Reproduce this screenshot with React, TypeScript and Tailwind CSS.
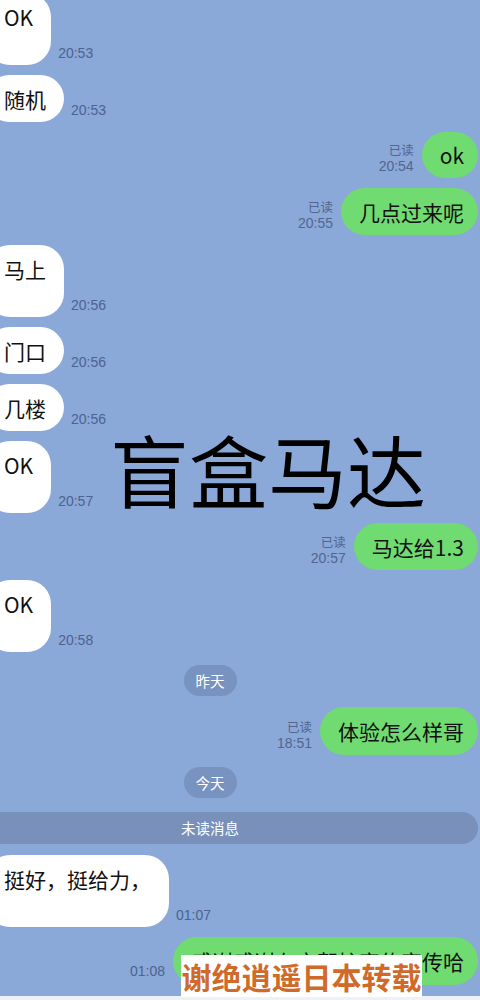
import React from "react";

const FONT = { fontFamily: '"Noto Sans CJK SC", "Noto Sans", sans-serif' };
const TS = { fontFamily: '"Liberation Sans", "Noto Sans CJK SC", sans-serif' };

function Left({ text, h, time }: { text: string; h: "s" | "t"; time: string }) {
  return (
    <div className="flex items-end gap-[7px]">
      <div
        className={
          "-ml-[14px] pl-[18px] pr-[18px] bg-white text-[#111] text-[21px] leading-[28px] rounded-[24px] " +
          (h === "t" ? "h-[72px] pt-[10px]" : "h-[47px] pt-[10px]")
        }
      >
        {text}
      </div>
      <div className="mb-[4px] text-[14px] leading-[16px] text-[#4d6390]" style={TS}>
        {time}
      </div>
    </div>
  );
}

function Right({ text, time, h = 47 }: { text: string; time: string; h?: number }) {
  return (
    <div className="flex items-end justify-end gap-[8px]">
      <div className="mb-[4px] flex flex-col items-end text-[#52668f]">
        <span className="text-[12.5px] leading-[16px]">已读</span>
        <span className="text-[14px] leading-[16px]" style={TS}>
          {time}
        </span>
      </div>
      <div
        className="mr-[2px] pl-[18px] pr-[14px] bg-[#70db70] text-[#111] text-[21px] leading-[28px] rounded-[24px] flex items-center"
        style={{ height: h }}
      >
        {text}
      </div>
    </div>
  );
}

function Pill({ text }: { text: string }) {
  return (
    <div className="flex justify-center pr-[60px]">
      <div className="h-[31px] px-[12px] rounded-full bg-[#7893bf] text-white text-[14.5px] leading-[31px]">{text}</div>
    </div>
  );
}

export default function App() {
  return (
    <div className="relative w-[480px] h-[1000px] overflow-hidden bg-[#8aa8d8]" style={FONT}>
      <div className="flex flex-col gap-[10px] -mt-[7px]">
        <Left text="OK" h="t" time="20:53" />
        <Left text="随机" h="s" time="20:53" />
        <Right text="ok" time="20:54" h={46} />
        <Right text="几点过来呢" time="20:55" />
        <Left text="马上" h="t" time="20:56" />
        <Left text="门口" h="s" time="20:56" />
        <Left text="几楼" h="s" time="20:56" />
        <Left text="OK" h="t" time="20:57" />
        <Right text="马达给1.3" time="20:57" />
        <Left text="OK" h="t" time="20:58" />
        <div className="mt-[3px]">
          <Pill text="昨天" />
        </div>
        <div className="mt-[1px]">
          <Right text="体验怎么样哥" time="18:51" h={48} />
        </div>
        <div className="mt-[2px]">
          <Pill text="今天" />
        </div>
        <div className="mt-[4px] -ml-[16px] mr-[2px] h-[32px] rounded-full bg-[#7890ba] flex items-center justify-center pr-[42px] text-white text-[14.5px]">
          未读消息
        </div>
        <div className="mt-[1px]">
          <Left text="挺好，挺给力，" h="t" time="01:07" />
        </div>
        <div className="flex items-end justify-end gap-[8px]">
          <div className="mb-[6px] text-[14px] leading-[16px] text-[#4d6390]" style={TS}>
            01:08
          </div>
          <div className="mr-[2px] h-[48px] pl-[18px] pr-[14px] bg-[#70db70] text-[#111] text-[21px] leading-[28px] rounded-[24px] flex items-center">
            感谢感谢有空帮忙宣传宣传哈
          </div>
        </div>
      </div>

      <div className="absolute left-0 right-0 bottom-0 h-[4px] bg-[#eef1f6]" />

      <div className="absolute left-[110px] top-[421px] text-[79px] leading-[96px] text-black whitespace-nowrap">
        盲盒马达
      </div>

      <div className="absolute left-[181px] top-[955px] w-[241px] h-[42px] bg-white flex items-center justify-center">
        <span className="text-[30px] leading-[36px] font-bold text-[#cf6a2a] whitespace-nowrap">谢绝逍遥日本转载</span>
      </div>
    </div>
  );
}
